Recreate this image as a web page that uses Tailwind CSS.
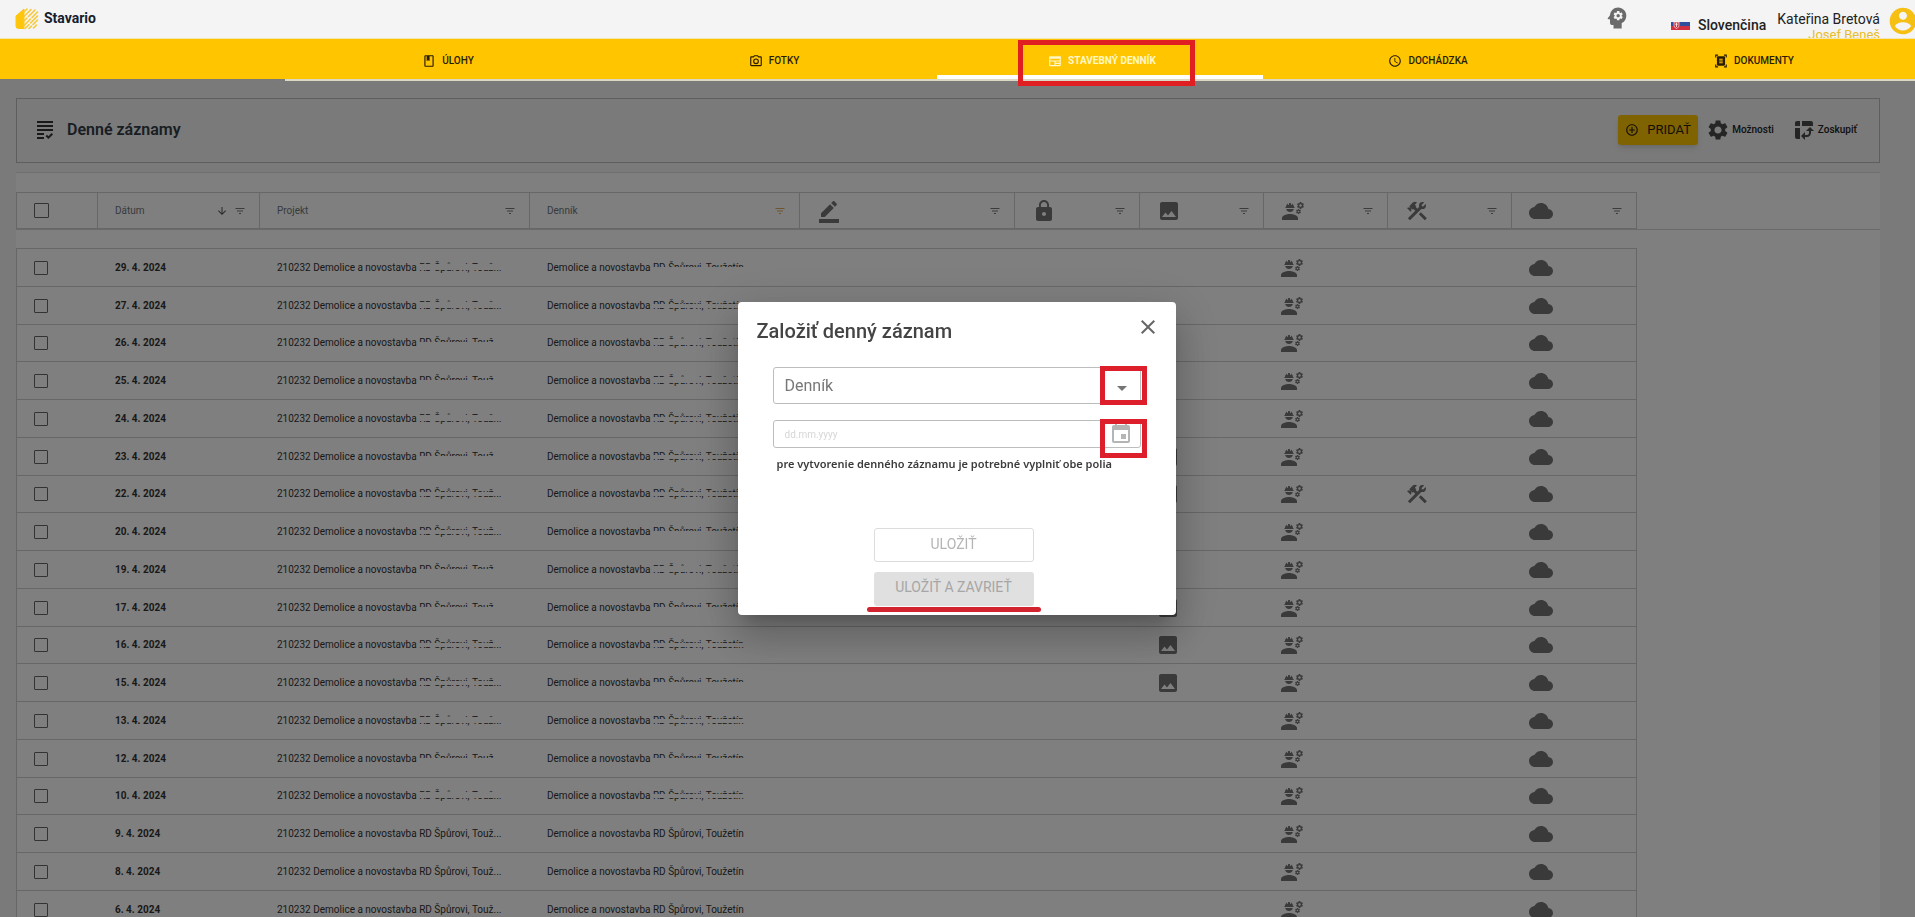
<!DOCTYPE html>
<html lang="sk">
<head>
<meta charset="utf-8">
<title>Stavario – Denné záznamy</title>
<script src="https://cdn.jsdelivr.net/npm/@tailwindcss/browser@4"></script>
</head>
<body class="h-screen overflow-hidden bg-[#f4f4f4] font-['Roboto',sans-serif] text-[#222]">

<svg class="hidden" aria-hidden="true">
  <symbol id="filter" viewBox="0 0 24 24"><path d="M10 18h4v-2h-4v2zM3 6v2h18V6H3zm3 7h12v-2H6v2z"/></symbol>
  <symbol id="down" viewBox="0 0 24 24"><path d="m20 12-1.41-1.41L13 16.17V4h-2v12.17l-5.58-5.59L4 12l8 8 8-8z"/></symbol>
  <symbol id="pencil" viewBox="0 0 24 24"><path d="M22 24H2v-4h20v4zM13.06 5.19l3.75 3.75L7.75 18H4v-3.75l9.06-9.06zm4.82 2.68-3.75-3.75 1.83-1.83c.39-.39 1.02-.39 1.41 0l2.34 2.34c.39.39.39 1.02 0 1.41l-1.83 1.83z"/></symbol>
  <symbol id="lock" viewBox="0 0 24 24"><path d="M18 8h-1V6c0-2.76-2.24-5-5-5S7 3.240 7 6v2H6c-1.100 0-2 .9-2 2v10c0 1.100.9 2 2 2h12c1.100 0 2-.9 2-2V10c0-1.100-.9-2-2-2zm-6 9c-1.100 0-2-.9-2-2s.9-2 2-2 2 .9 2 2-.9 2-2 2zm3.100-9H8.900V6c0-1.710 1.390-3.100 3.100-3.100 1.710 0 3.100 1.390 3.100 3.100v2z"/></symbol>
  <symbol id="image" viewBox="0 0 24 24"><path d="M21 19V5c0-1.100-.9-2-2-2H5c-1.100 0-2 .9-2 2v14c0 1.100.9 2 2 2h14c1.100 0 2-.9 2-2zM8.500 13.500l2.500 3.010L14.500 12l4.500 6H5l3.500-4.500z"/></symbol>
  <symbol id="workers" viewBox="0 0 24 24"><path d="M9 15c-2.670 0-8 1.340-8 4v2h16v-2c0-2.660-5.330-4-8-4zm13.100-8.160c.01-.11.02-.22.02-.34 0-.12-.01-.23-.03-.34l.74-.58c.07-.05.08-.15.04-.22l-.7-1.210c-.04-.08-.14-.1-.21-.08l-.86.35c-.18-.14-.38-.25-.59-.34l-.13-.93c-.02-.09-.09-.15-.18-.15h-1.400c-.09 0-.16.06-.17.15l-.13.93c-.21.09-.41.21-.59.34l-.87-.35c-.08-.03-.17 0-.21.08l-.7 1.210c-.04.08-.03.17.04.22l.74.58c-.02.11-.03.23-.03.34 0 .11.01.23.03.34l-.74.58c-.07.05-.08.15-.04.22l.7 1.210c.04.08.14.1.21.08l.87-.35c.18.14.38.25.59.34l.13.93c.01.09.08.15.17.15h1.400c.09 0 .16-.06.17-.15l.13-.93c.21-.09.41-.21.59-.34l.87.35c.08.03.17 0 .21-.08l.7-1.210c.04-.08.03-.17-.04-.22l-.73-.58zm-2.600.91c-.69 0-1.250-.56-1.250-1.250s.56-1.250 1.250-1.250 1.250.56 1.250 1.250-.56 1.250-1.250 1.250zm.42 3.930-.5-.87c-.03-.06-.1-.08-.15-.06l-.62.25c-.13-.1-.27-.18-.42-.24l-.09-.66c-.02-.06-.08-.1-.14-.1h-1c-.06 0-.11.04-.12.11l-.09.66c-.15.06-.29.15-.42.24l-.62-.25c-.06-.02-.12 0-.15.06l-.5.87c-.03.06-.02.12.03.16l.53.41c-.01.08-.02.16-.02.24 0 .08.01.17.02.24l-.53.41c-.05.04-.06.11-.03.16l.5.87c.03.06.1.08.15.06l.62-.25c.13.1.27.18.42.24l.09.66c.01.07.06.11.12.11h1c.06 0 .12-.04.12-.11l.09-.66c.15-.06.29-.15.42-.24l.62.25c.06.02.12 0 .15-.06l.5-.87c.03-.06.02-.12-.03-.16l-.52-.41c.01-.08.02-.16.02-.24 0-.08-.01-.17-.02-.24l.53-.41c.05-.04.06-.11.04-.17zm-2.420 1.650c-.46 0-.83-.38-.83-.83 0-.46.38-.83.83-.83s.83.38.83.83c0 .46-.37.83-.83.83zM4.740 9h8.530c.27 0 .49-.22.49-.49v-.02c0-.27-.22-.49-.49-.49H13c0-1.480-.81-2.750-2-3.450v.95c0 .28-.22.5-.5.5s-.5-.22-.5-.5V4.140C9.680 4.060 9.350 4 9 4s-.68.06-1 .14V5.500c0 .28-.22.5-.5.5S7 5.780 7 5.500v-.95C5.810 5.250 5 6.520 5 8h-.26c-.27 0-.49.22-.49.49v.03c0 .26.22.48.49.48zM9 13c1.860 0 3.410-1.280 3.860-3H5.140c.45 1.720 2 3 3.860 3z"/></symbol>
  <symbol id="tools" viewBox="0 0 24 24"><path d="m13.780 15.300 6 6 2.110-2.160-6-6-2.110 2.160zm3.720-5.200c-.39 0-.81-.05-1.140-.19L4.970 21.250l-2.110-2.110 7.410-7.400L8.500 9.960l-.72.7-1.450-1.410v2.860l-.7.7-3.520-3.560.7-.7h2.810l-1.400-1.410 3.560-3.560c1.170-1.170 3.050-1.170 4.220 0L9.890 5.740l1.410 1.400-.71.71 1.790 1.780 1.820-1.880c-.14-.33-.2-.75-.2-1.120a3.490 3.490 0 0 1 3.500-3.520c.59 0 1.110.14 1.580.42L16.410 6.200l1.500 1.500 2.670-2.670c.28.47.42.97.42 1.600 0 1.920-1.550 3.470-3.500 3.470z"/></symbol>
  <symbol id="cloud" viewBox="0 0 24 24"><path d="M19.350 10.040C18.670 6.590 15.640 4 12 4 9.110 4 6.600 5.640 5.350 8.040 2.340 8.360 0 10.910 0 14c0 3.310 2.690 6 6 6h13c2.760 0 5-2.240 5-5 0-2.640-2.050-4.780-4.650-4.960z"/></symbol>
</svg>

<!-- Top bar -->
<header class="relative z-20 flex h-[39px] items-start justify-between overflow-hidden border-b border-[#f3e6b4] bg-[#f4f4f4]">
  <a href="#" class="flex items-center gap-[5px] pt-[6px] pl-[15px]">
    <svg class="h-[23px] w-6" viewBox="0 0 24 23" aria-hidden="true">
      <path d="M1 9 9 2v19.500H3.500a2.500 2.500 0 0 1-2.500-2.500z" fill="#ffc60b" stroke="#ffc60b" stroke-linejoin="round"/>
      <g stroke="#f7c93a" stroke-width="1.600" stroke-linecap="round" fill="none">
        <path d="M9 5 12 2M9 9.500 16 2.500M9 14l3-3M13.500 9.500 20 3M9 18.500l6.500-6.500M17 10.500 22.500 5M10 21.500l4-4M15.500 16l7-7M14 21.500l2.500-2.500M18 17.500l4.500-4.500M18.500 21l3-3"/>
      </g>
    </svg>
    <span class="text-sm leading-6 font-bold text-[#16202c]">Stavario</span>
  </a>
  <div class="flex items-start">
    <button type="button" aria-label="Asistent" class="mt-[4px] mr-10">
      <svg class="size-7 fill-[#6b6b6b]" viewBox="0 0 24 24"><path d="M13 8.570c-.79 0-1.430.64-1.430 1.430s.64 1.430 1.430 1.430 1.430-.64 1.430-1.430-.64-1.430-1.430-1.430z"/><path d="M13 3C9.250 3 6.200 5.940 6.020 9.640L4.100 12.200c-.25.33-.01.8.4.8H6v3c0 1.100.9 2 2 2h1v3h7v-4.680c2.360-1.120 4-3.530 4-6.320 0-3.870-3.130-7-7-7zm3 7c0 .13-.01.26-.02.39l.83.66c.08.06.1.16.05.25l-.8 1.390c-.05.09-.16.12-.24.09l-.99-.4c-.21.16-.43.29-.67.39L14 13.830c-.01.1-.1.17-.2.17h-1.600c-.1 0-.18-.07-.2-.17l-.15-1.060c-.25-.1-.47-.23-.68-.39l-.99.4c-.09.03-.2 0-.25-.09l-.8-1.390c-.05-.08-.03-.19.05-.25l.84-.66c-.01-.13-.02-.26-.02-.39s.02-.27.04-.39l-.85-.66c-.08-.06-.1-.16-.05-.26l.8-1.380c.05-.09.15-.12.24-.09l1 .4c.2-.15.43-.29.67-.39L12 6.170c.02-.1.1-.17.2-.17h1.600c.1 0 .18.07.2.17l.15 1.060c.24.1.46.23.67.39l1-.4c.09-.03.2 0 .24.09l.8 1.380c.05.09.03.2-.05.26l-.85.66c.03.12.04.25.04.39z"/></svg>
    </button>
    <button type="button" class="mt-[15px] flex items-center gap-2">
      <svg class="h-[10px] w-[19px]" viewBox="0 0 19 10" aria-hidden="true"><path fill="#f1f1f4" d="M0 0h19v4H0z"/><path fill="#2f4f9e" d="M0 2h19v5H0z"/><path fill="#d0303f" d="M0 6h19v4H0z"/><path fill="#d0303f" stroke="#fff" stroke-width=".6" d="M3 2h5v3.500Q8 7.500 5.500 8.500 3 7.500 3 5.500z"/><path stroke="#fff" stroke-width=".8" d="M5.500 2.800V7M4.200 4.200h2.600"/></svg>
      <span class="text-sm leading-5 font-medium">Slovenčina</span>
    </button>
    <div class="mt-[9px] ml-[11px] flex flex-col items-end">
      <span class="text-sm leading-5">Kateřina Bretová</span>
      <span class="text-[13px] leading-3 text-[#e8bd2c]">Josef Beneš</span>
    </div>
    <button type="button" aria-label="Účet" class="-mr-1 mt-[5px] ml-[7px]">
      <svg class="size-8 fill-[#f5bf14]" viewBox="0 0 24 24"><path d="M12 2C6.480 2 2 6.480 2 12s4.480 10 10 10 10-4.480 10-10S17.520 2 12 2zm0 3c1.660 0 3 1.340 3 3s-1.340 3-3 3-3-1.340-3-3 1.340-3 3-3zm0 14.200c-2.500 0-4.710-1.280-6-3.220.03-1.990 4-3.080 6-3.080 1.990 0 5.970 1.090 6 3.080-1.290 1.940-3.500 3.220-6 3.220z"/></svg>
    </button>
  </div>
</header>

<!-- Main tabs -->
<nav class="relative z-20 h-10 bg-[#ffc600] pl-[285px]">
  <ul class="grid h-[42px] grid-cols-5 border-b-2 border-[#dcd8c4] text-[10px] font-medium text-[#2a1c00]">
    <li><a href="#" class="flex h-full items-center justify-center gap-[6px] pt-[3px]">
      <svg class="size-[14px] fill-current" viewBox="0 0 24 24"><path d="M18 2H6c-1.100 0-2 .9-2 2v16c0 1.100.9 2 2 2h12c1.100 0 2-.9 2-2V4c0-1.100-.9-2-2-2zm0 18H6V4h2v8l2.500-1.500L13 12V4h5v16z"/></svg>ÚLOHY</a></li>
    <li><a href="#" class="flex h-full items-center justify-center gap-[6px] pt-[3px]">
      <svg class="size-[14px] fill-current" viewBox="0 0 24 24"><path d="M20 4h-3.170L15 2H9L7.170 4H4c-1.100 0-2 .9-2 2v13c0 1.100.9 2 2 2h16c1.100 0 2-.9 2-2V6c0-1.100-.9-2-2-2zm0 15H4V6h4.050l1.830-2h4.240l1.830 2H20v13zM12 7.500a5 5 0 1 0 0 10 5 5 0 0 0 0-10zm0 8a3 3 0 1 1 0-6 3 3 0 0 1 0 6z"/></svg>FOTKY</a></li>
    <li class="relative"><a href="#" aria-current="page" class="flex h-full items-center justify-center gap-[6px] border-b-4 border-white pt-[7px] pl-1 font-bold text-[#fff7c8]">
      <svg class="size-[14px] fill-current" viewBox="0 0 24 24"><path d="M22 3 20.300 4.700 18.700 3 17 4.700 15.300 3 13.700 4.700 12 3 10.300 4.700 8.700 3 7 4.700 5.300 3 3.700 4.700 2 3v16c0 1.100.9 2 2 2h16c1.100 0 2-.9 2-2V3zM11 19H4v-6h7v6zm9 0h-7v-2h7v2zm0-4h-7v-2h7v2zm0-4H4V8h16v3z"/></svg>STAVEBNÝ DENNÍK</a>
      <span class="pointer-events-none absolute top-px left-1/2 h-[46px] w-[177px] -translate-x-[82px] border-[5px] border-[#e01f22]"></span></li>
    <li><a href="#" class="flex h-full items-center justify-center gap-[6px] pt-[3px] pl-1">
      <svg class="size-[14px] fill-current" viewBox="0 0 24 24"><path d="M11.990 2C6.470 2 2 6.480 2 12s4.470 10 9.990 10C17.520 22 22 17.520 22 12S17.520 2 11.990 2zM12 20c-4.420 0-8-3.580-8-8s3.580-8 8-8 8 3.580 8 8-3.580 8-8 8zm.5-13H11v6l5.250 3.150.75-1.230-4.500-2.670z"/></svg>DOCHÁDZKA</a></li>
    <li><a href="#" class="flex h-full items-center justify-center gap-[6px] pt-[3px] pl-1">
      <svg class="size-[14px] fill-current" viewBox="0 0 24 24"><path d="M7 3H4v3H2V1h5v2zm15 3V1h-5v2h3v3h2zM7 21H4v-3H2v5h5v-2zm13-3v3h-3v2h5v-5h-2zM19 18c0 1.100-.9 2-2 2H7c-1.100 0-2-.9-2-2V6c0-1.100.9-2 2-2h10c1.100 0 2 .9 2 2v12zM15 8H9v2h6V8zm0 3H9v2h6v-2zm0 3H9v2h6v-2z"/></svg>DOKUMENTY</a></li>
  </ul>
</nav>

<main class="pt-[19px] pr-[35px] pl-4">
  <!-- Toolbar -->
  <section class="flex h-[65px] items-center justify-between border border-[#bdbdbd] pr-[22px] pb-[2px] pl-4">
    <div class="flex items-center gap-[10px]">
      <svg class="size-6 fill-[#333]" viewBox="0 0 24 24" aria-hidden="true"><path d="M4 7h16v2H4zm0 6h16v-2H4zm0 4h7v-2H4zm0 4h7v-2H4zm11.410-2.830L14 16.750l-1.410 1.410L15.410 21 20 16.420 18.580 15zM4 3h16v2H4z"/></svg>
      <h1 class="text-base font-semibold text-[#333c46]">Denné záznamy</h1>
    </div>
    <div class="flex items-center text-[10px] font-medium text-[#222]">
      <button type="button" class="mr-2 flex h-[30px] w-20 items-center justify-center gap-2 rounded-[3px] bg-[#ffc600] text-[13px] font-normal text-[#2a2210] shadow-md">
        <svg class="size-[14px] fill-current" viewBox="0 0 24 24"><path d="M13 7h-2v4H7v2h4v4h2v-4h4v-2h-4V7zm-1-5C6.480 2 2 6.480 2 12s4.480 10 10 10 10-4.480 10-10S17.520 2 12 2zm0 18c-4.410 0-8-3.590-8-8s3.590-8 8-8 8 3.590 8 8-3.590 8-8 8z"/></svg>PRIDAŤ</button>
      <button type="button" class="mr-[18px] flex items-center gap-[2px]">
        <svg class="size-6 fill-[#4a4a4a]" viewBox="0 0 24 24"><path d="M19.140 12.940c.04-.3.06-.61.06-.94 0-.32-.02-.64-.07-.94l2.030-1.580c.18-.14.23-.41.12-.61l-1.920-3.320c-.12-.22-.37-.29-.59-.22l-2.390.96c-.5-.38-1.030-.7-1.620-.94l-.36-2.540c-.04-.24-.24-.41-.48-.41h-3.840c-.24 0-.43.17-.47.41l-.36 2.540c-.59.24-1.130.57-1.620.94l-2.390-.96c-.22-.08-.47 0-.59.22L2.740 8.870c-.12.21-.08.47.12.61l2.030 1.580c-.05.3-.09.63-.09.94s.02.64.07.94l-2.030 1.580c-.18.14-.23.41-.12.61l1.920 3.320c.12.22.37.29.59.22l2.390-.96c.5.38 1.030.7 1.620.94l.36 2.540c.05.24.24.41.48.41h3.840c.24 0 .44-.17.47-.41l.36-2.540c.59-.24 1.130-.56 1.620-.94l2.390.96c.22.08.47 0 .59-.22l1.920-3.320c.12-.22.07-.47-.12-.61l-2.010-1.580zM12 15.600c-1.980 0-3.600-1.620-3.600-3.600s1.620-3.600 3.600-3.600 3.600 1.620 3.600 3.600-1.620 3.600-3.600 3.600z"/></svg>Možnosti</button>
      <button type="button" class="flex items-center gap-[2px]">
        <svg class="size-6 fill-[#4a4a4a]" viewBox="0 0 24 24"><path d="M10 8h11V5c0-1.100-.9-2-2-2h-9v5zM3 8h5V3H5c-1.100 0-2 .9-2 2v3zm2 13h3V10H3v9c0 1.100.9 2 2 2z"/><path d="m13 22-4-4 4-4v3h2c1.100 0 2-.9 2-2v-2h-3l4-4 4 4h-3v2c0 2.200-1.800 4-4 4h-2z"/></svg>Zoskupiť</button>
    </div>
  </section>

  <!-- Records grid -->
  <section class="mt-[9px] border-t border-[#dcdcdc] bg-white text-[10px]">
    <div class="border-b border-[#d4d4d4] pt-[19px]">
      <table class="w-[1621px] table-fixed border-separate border-spacing-0 border border-[#cfcfcf]">
        <colgroup><col class="w-[81px]"><col class="w-[162px]"><col class="w-[270px]"><col class="w-[270px]"><col class="w-[215px]"><col class="w-[125px]"><col class="w-[124px]"><col class="w-[124px]"><col class="w-[124px]"><col></colgroup>
        <thead><tr id="head" class="h-[35px]"></tr></thead>
      </table>
    </div>
    <table class="mt-[18px] w-[1621px] table-fixed border-separate border-spacing-0 border border-[#cfcfcf] border-b-0">
      <colgroup><col class="w-[81px]"><col class="w-[162px]"><col class="w-[270px]"><col class="w-[270px]"><col class="w-[215px]"><col class="w-[125px]"><col class="w-[124px]"><col class="w-[124px]"><col class="w-[124px]"><col></colgroup>
      <tbody id="rows"></tbody>
    </table>
  </section>
</main>

<!-- New record dialog -->
<div class="fixed inset-0 z-10 flex items-center justify-center bg-black/50 pr-[2px]">
  <form role="dialog" aria-labelledby="dlg-title" class="flex w-[438px] flex-col rounded-[4px] bg-white pb-[9px] shadow-[0_11px_15px_-7px_rgba(0,0,0,.2),0_24px_38px_3px_rgba(0,0,0,.14),0_9px_46px_8px_rgba(0,0,0,.12)]">
    <div class="flex items-start justify-between pt-[13px] pr-4 pl-[19px]">
      <h2 id="dlg-title" class="text-xl leading-8 font-medium text-[#444]">Založiť denný záznam</h2>
      <button type="button" aria-label="Zavrieť"><svg class="size-6 fill-[#666]" viewBox="0 0 24 24"><path d="M19 6.410 17.590 5 12 10.590 6.410 5 5 6.410 10.590 12 5 17.590 6.410 19 12 13.410 17.590 19 19 17.590 13.410 12z"/></svg></button>
    </div>
    <div class="relative mx-[35px] mt-5">
      <select aria-label="Denník" class="block h-[37px] w-full appearance-none rounded-[3px] border border-[#bdbdbd] bg-white px-[11px] text-base leading-5 text-[#777]"><option>Denník</option></select>
      <svg class="pointer-events-none absolute top-2 right-[7px] size-6 fill-[#757575]" viewBox="0 0 24 24"><path d="m7 11 5 5 5-5z"/></svg>
      <span class="pointer-events-none absolute -top-px -right-[6px] h-[39px] w-[47px] border-[5px] border-[#dc1f2a]"></span>
    </div>
    <div class="relative mx-[35px] mt-4">
      <input type="text" aria-label="Dátum" placeholder="dd.mm.yyyy" class="block h-7 w-full rounded-[3px] border border-[#bdbdbd] px-[11px] text-[10px] placeholder:text-[#d6d6d6]">
      <button type="button" aria-label="Vybrať dátum" class="absolute top-[2px] right-2"><svg class="size-6 fill-[#b5b5b5]" viewBox="0 0 24 24"><path d="M17 12h-5v5h5v-5zM16 1v2H8V1H6v2H5c-1.110 0-1.990.9-1.990 2L3 19c0 1.100.89 2 2 2h14c1.100 0 2-.9 2-2V5c0-1.100-.9-2-2-2h-1V1h-2zm3 18H5V8h14v11z"/></svg></button>
      <span class="pointer-events-none absolute -top-px -right-[6px] h-[39px] w-[47px] border-[5px] border-[#dc1f2a]"></span>
    </div>
    <p class="mt-2 ml-[39px] font-['Noto_Sans',sans-serif] text-[11px] leading-4 font-semibold text-[#3c3c3c]">pre vytvorenie denného záznamu je potrebné vyplniť obe polia</p>
    <div class="mt-14 ml-[136px] flex w-40 flex-col gap-[10px]">
      <button type="button" disabled class="h-[34px] rounded-[3px] border border-[#dcdcdc] pb-[2px] text-sm text-[#b4b4b4]">ULOŽIŤ</button>
      <div class="relative">
        <button type="submit" disabled class="h-[34px] w-full rounded-[3px] bg-[#e0e0e0] pb-1 text-sm text-[#a6a6a6]">ULOŽIŤ A ZAVRIEŤ</button>
        <span class="absolute top-[35px] -left-[7px] h-[5px] w-[174px] rounded-full bg-[#d3232e]"></span>
      </div>
    </div>
  </form>
</div>

<script>
const icon = id => `<svg class="size-6 fill-[#757575]" viewBox="0 0 24 24"><use href="#${id}"/></svg>`;

const head = [
  '<input type="checkbox" aria-label="Vybrať všetko" class="ml-[17px] block size-[15px] appearance-none rounded-[1px] border border-[#666]">',
  'Dátum', 'Projekt', 'Denník', icon('pencil'), icon('lock'), icon('image'), icon('workers'), icon('tools'), icon('cloud')
];
document.getElementById('head').innerHTML = head.map((h, i) => {
  const filter = `<svg class="size-3 ${i === 3 ? 'fill-[#e0a860]' : 'fill-[#777]'}" viewBox="0 0 24 24"><use href="#filter"/></svg>`;
  const sort = i === 1 ? '<svg class="size-3 fill-[#555]" viewBox="0 0 24 24"><use href="#down"/></svg>' : '';
  return `<th class="border-r border-[#cfcfcf] p-0 text-left font-normal text-[#6f767c] last:border-r-0">${i === 0 ? h :
    `<div class="flex items-center justify-between pr-[13px] pl-[17px]">${h}<span class="flex items-center gap-[6px]">${sort}${filter}</span></div>`}</th>`;
}).join('');

// Each row: date, cover over the project name, cover over the diary name, image, tools.
// Covers: L keeps the lower edge of the letters visible, U the upper edge, M both edges.
const rows = [
  ['29. 4. 2024', 'L', 'U'], ['27. 4. 2024', 'L', 'M'], ['26. 4. 2024', 'U', 'L'],
  ['25. 4. 2024', 'U', 'L'], ['24. 4. 2024', 'L', 'M'], ['23. 4. 2024', 'U', 'M', 1],
  ['22. 4. 2024', 'M', 'M', 1, 1], ['20. 4. 2024', 'M', 'U'], ['19. 4. 2024', 'U', 'L'],
  ['17. 4. 2024', 'U', 'U', 1], ['16. 4. 2024', 'M', 'M', 1], ['15. 4. 2024', 'M', 'U', 1],
  ['13. 4. 2024', 'L', 'M'], ['12. 4. 2024', 'U', 'U'], ['10. 4. 2024', 'L', 'M'],
  ['9. 4. 2024'], ['8. 4. 2024'], ['6. 4. 2024']
];
const cover = {
  L: '<i class="absolute top-[3px] left-0 h-[6px] w-full bg-white"></i>',
  U: '<i class="absolute top-[6px] left-0 h-[7px] w-full bg-white"></i>',
  M: '<i class="absolute top-[5px] left-0 h-[4px] w-full bg-white"></i>'
};
const covered = (text, c) => `<span class="relative inline-block">${text}${c ? cover[c] : ''}</span>`;
const td = (html, cls = '') => `<td class="border-b border-[#cfcfcf] p-0 ${cls}">${html}</td>`;
document.getElementById('rows').innerHTML = rows.map(([d, p, n, img, tools]) =>
  `<tr class="h-[38px] nth-[4n+3]:h-[37px] leading-[14px] text-[#333]">` +
  td(`<input type="checkbox" aria-label="${d}" class="ml-[17px] block size-[14px] appearance-none rounded-[1px] border border-[#666]">`) +
  td(d, 'pl-[17px] font-bold') +
  td('210232 Demolice a novostavba ' + covered('RD Špůrovi, Touž...', p), 'pl-[17px] whitespace-nowrap') +
  td('Demolice a novostavba ' + covered('RD Špůrovi, Toužetín', n), 'pl-[17px] whitespace-nowrap') +
  td('') + td('') +
  td(img ? icon('image') : '', 'pl-4') +
  td(icon('workers'), 'pl-4') +
  td(tools ? icon('tools') : '', 'pl-[17px]') +
  td(icon('cloud'), 'pl-[17px]') + '</tr>').join('');
</script>
</body>
</html>
